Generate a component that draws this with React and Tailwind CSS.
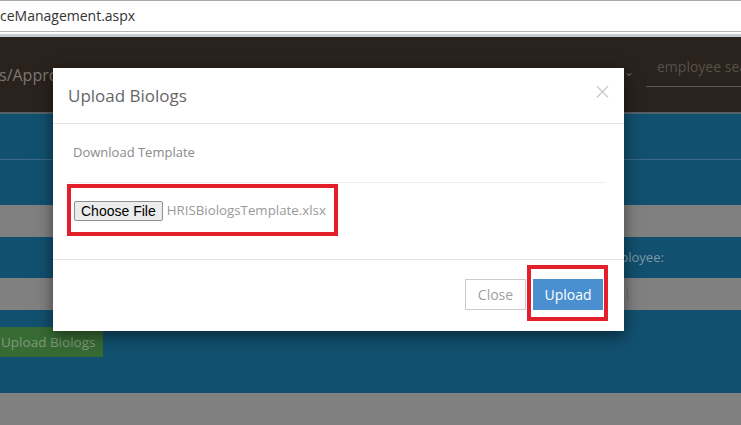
import React from 'react';

export default function App() {
  return (
    <div className="relative w-[741px] h-[425px] overflow-hidden bg-[#808080] font-['Open_Sans',sans-serif]">
      {/* Browser address bar */}
      <div className="h-[32px] bg-white border-t border-[#a9a9a9] border-b border-b-[#b5b5b5] flex items-center">
        <span className="text-[14px] text-[#333] leading-none">ceManagement.aspx</span>
      </div>
      <div className="h-[2px] bg-white" />
      <div className="h-[3px] bg-[#c9ccd0]" />

      {/* Page header (dimmed) */}
      <div className="h-[75px] bg-[#2a221c] flex items-center relative">
        <span className="text-[16px] text-[#7e7771] -ml-[1px]">s/Approvals</span>
        <span className="ml-auto mr-[12px] mt-[-6px] text-[12px] text-[#6a645e]">⌄</span>
        <div className="w-[95px] h-[30px] border-b border-[#5c5751] mb-[6px] flex items-start overflow-hidden">
          <span className="ml-[11px] text-[14px] text-[#57514b] leading-[20px] whitespace-nowrap">employee sea</span>
        </div>
      </div>
      <div className="h-[2px] bg-[#566068]" />

      {/* Page body (dimmed) */}
      <div className="bg-[#11506f]">
        <div className="h-[46px] border-b border-[#3a6a86]" />
        <div className="h-[45px]" />
        <div className="h-[32px] bg-[#808080]" />
        <div className="h-[41px] flex items-center">
          <span className="ml-[601px] text-[13px] text-[#7f97a6] whitespace-nowrap">Employee:</span>
        </div>
        <div className="h-[32px] bg-[#808080] flex items-center">
          <div className="ml-[627px] w-[1px] h-[13px] bg-[#6c6c6c]" />
        </div>
        <div className="h-[83px] pt-[17px]">
          <div className="w-[103px] h-[30px] bg-[#386a34] flex items-center">
            <span className="ml-[1px] text-[13.5px] text-[#7d9c7a] whitespace-nowrap">Upload Biologs</span>
          </div>
        </div>
      </div>

      {/* Modal */}
      <div className="absolute left-[53px] top-[68px] w-[571px] h-[263px] bg-white shadow-[0_5px_15px_rgba(0,0,0,0.5)] flex flex-col">
        <div className="h-[56px] border-b border-[#e5e5e5] flex items-center px-[15px]">
          <h4 className="text-[17px] text-[#666] leading-[26px] mt-[1px]">Upload Biologs</h4>
          <span className="ml-auto -mr-[3px] mb-[9px] text-[#c4c4c4] text-[23px] leading-none font-['DejaVu_Sans',sans-serif] font-light">×</span>
        </div>

        <div className="h-[135px] flex flex-col">
          <div className="h-[58px] flex items-center pl-[20px]">
            <span className="text-[13px] text-[#8a8a8a]">Download Template</span>
          </div>
          <div className="ml-[15px] w-[537px] h-[1px] bg-[#ececec]" />
          <div className="ml-[14px] mt-[1px] w-[271px] h-[52px] border-4 border-[#e3202a] flex items-center pl-[3px] pt-[2px]">
            <span className="h-[20px] px-[6px] border border-[#8f8f8f] bg-[#ececec] rounded-[2px] text-[14px] leading-[18px] text-black font-['Liberation_Sans',sans-serif] whitespace-nowrap">
              Choose File
            </span>
            <span className="ml-[4px] text-[13.3px] text-[#9a9a9a] whitespace-nowrap">HRISBiologsTemplate.xlsx</span>
          </div>
        </div>

        <div className="flex-1 border-t border-[#e5e5e5] flex items-start justify-end pt-[19px] pr-[21px]">
          <button className="h-[31px] w-[61px] border border-[#cccccc] bg-white text-[14px] text-[#a0a0a0]">Close</button>
          <div className="relative ml-[7px]">
            <button className="h-[31px] w-[70px] bg-[#4a8fcf] text-[14px] text-white">Upload</button>
            <div className="absolute -left-[6px] -top-[14px] w-[81px] h-[56px] border-4 border-[#e3202a] pointer-events-none" />
          </div>
        </div>
      </div>
    </div>
  );
}
